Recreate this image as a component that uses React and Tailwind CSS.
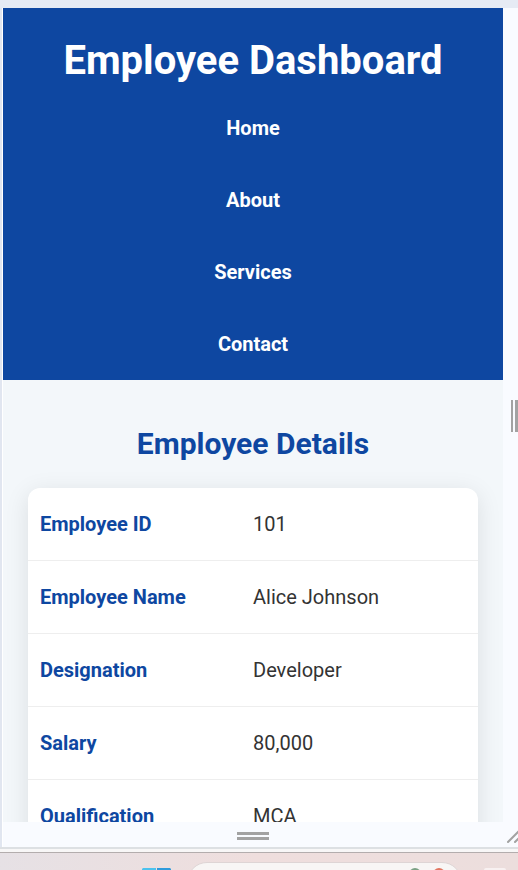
const links = ["Home", "About", "Services", "Contact"];

const details = [
  ["Employee ID", "101"],
  ["Employee Name", "Alice Johnson"],
  ["Designation", "Developer"],
  ["Salary", "80,000"],
  ["Qualification", "MCA"],
];

function Page() {
  return (
    <div className="min-h-0 min-w-0 flex-1 overflow-hidden bg-[#f3f7fa] text-[20px] text-[#333333]">
      <header className="bg-[#0e47a1] pt-[22px] text-center font-bold text-white">
        <h1 className="text-[40px] leading-[62px]">Employee Dashboard</h1>
        <nav>
          <ul>
            {links.map((link) => (
              <li key={link}>
                <a href="#" className="block leading-[72px]">
                  {link}
                </a>
              </li>
            ))}
          </ul>
        </nav>
      </header>
      <main className="px-[25px] pt-10">
        <h2 className="mb-5 text-center text-[30px] leading-[48px] font-bold text-[#0e47a1]">
          Employee Details
        </h2>
        <div className="overflow-hidden rounded-[12px] bg-white shadow-[0_5px_25px_rgba(0,0,0,0.1)]">
          <table className="w-full table-fixed">
            <tbody>
              {details.map(([label, value]) => (
                <tr key={label} className="border-b border-[#eeeeee]">
                  <th
                    scope="row"
                    className="w-[213px] py-5 pl-3 text-left leading-8 font-bold text-[#0e47a1]"
                  >
                    {label}
                  </th>
                  <td className="py-5 pl-3 leading-8">{value}</td>
                </tr>
              ))}
            </tbody>
          </table>
        </div>
      </main>
    </div>
  );
}

function Taskbar() {
  return (
    <footer className="flex h-[17px] items-start overflow-hidden bg-linear-to-r from-[#e6e1e5] via-[#efdedd] to-[#ecdedd]">
      <svg viewBox="0 0 30 30" className="mt-[15px] ml-[142px] h-[30px] w-[30px] shrink-0" aria-hidden="true">
        <path d="M1 0h13v14H0V1z" fill="#4cc2ee" />
        <path d="M15 0h13l1 1v13H15z" fill="#2f9bdc" />
      </svg>
      <div className="mt-[9px] ml-[15px] flex h-10 w-[275px] shrink-0 justify-end gap-3 rounded-[20px] border border-[#ded5d5] bg-[#f8f6f5] pt-[5px] pr-4">
        <svg viewBox="0 0 12 12" className="h-3 w-3" aria-hidden="true">
          <circle cx="6" cy="6" r="6" fill="#7ba184" />
        </svg>
        <svg viewBox="0 0 12 12" className="h-3 w-3" aria-hidden="true">
          <circle cx="6" cy="6" r="6" fill="#e27560" />
        </svg>
      </div>
      <div className="mt-[15px] ml-[22px] h-6 w-[22px] shrink-0 rounded-[2px] bg-[#f8f1f1]" />
    </footer>
  );
}

export default function App() {
  return (
    <div className="flex h-screen flex-col overflow-hidden bg-[#f9fbff] font-[Roboto,sans-serif]">
      <div className="h-2 shrink-0 bg-[#e6ebf4]" />
      <div className="flex min-h-0 flex-1">
        <div className="w-[3px] shrink-0 border-r border-l-2 border-r-white border-l-[#e1e6f0]" />
        <div className="flex min-w-0 flex-1 flex-col">
          <div className="flex min-h-0 flex-1">
            <Page />
            <div className="flex w-[15px] shrink-0 pt-[392px] pl-2">
              <div className="h-8 w-[7px] border-l-2 border-r-3 border-[#a2a2a2]" />
            </div>
          </div>
          <div className="flex h-[25px] shrink-0 pr-[15px]">
            <div className="mx-auto mt-[10px] h-2 w-8 border-y-3 border-[#a2a2a2]" />
          </div>
        </div>
      </div>
      <div className="h-[5px] shrink-0 border-t-2 border-[#dde0e3] bg-[#f8f7f7]" />
      <div className="h-px shrink-0 bg-[#b3adad]" />
      <Taskbar />
      <svg
        viewBox="0 0 12 14"
        className="absolute right-0 bottom-[26px] h-[14px] w-3"
        fill="none"
        stroke="#a2a2a2"
        strokeWidth="2"
        strokeLinecap="round"
        aria-hidden="true"
      >
        <path d="M2 12 14 0M9 12l6-6" />
      </svg>
    </div>
  );
}
